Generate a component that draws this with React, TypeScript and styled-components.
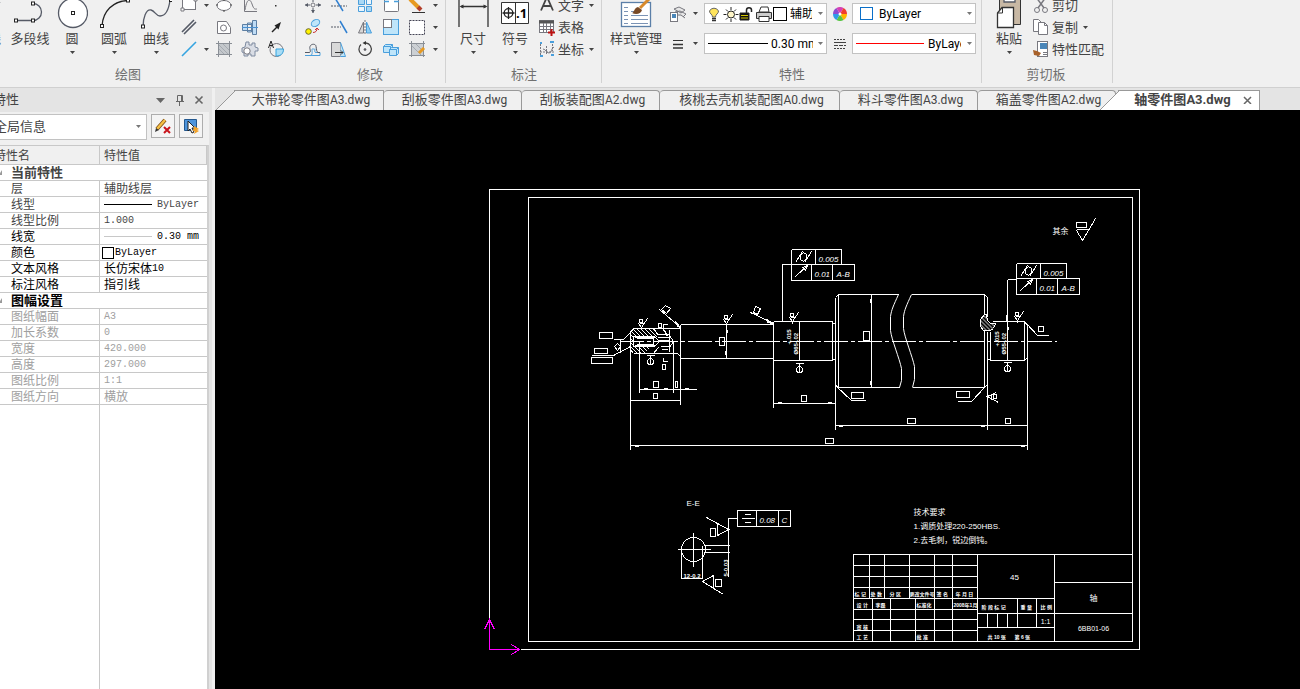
import React from "react";
import styled, { createGlobalStyle, css } from "styled-components";

const GlobalStyle = createGlobalStyle`
  * { box-sizing: border-box; }
  body {
    margin: 0;
    overflow: hidden;
    background: #f0f0f0;
    color: #444;
    font: 13px/18px "Open Sans", "Noto Sans CJK SC", sans-serif;
  }
  button, select { font: inherit; color: inherit; }
  svg { display: block; flex: none; }
`;

/* ---------- layout ---------- */

const Page = styled.div`
  display: flex;
  flex-direction: column;
  height: 100vh;
  overflow: hidden;
`;

const Ribbon = styled.header`
  display: flex;
  flex: none;
  height: 88px;
  margin-left: -39px;
  padding-bottom: 4px;
  border-bottom: 1px solid #d0d0d0;
  background: #f0f0f0;
`;

const Group = styled.section<{ $pad?: string }>`
  display: flex;
  flex: none;
  flex-direction: column;
  padding: ${(p) => p.$pad || "0"};
  border-right: 1px solid #d2d2d2;
`;

const GroupTools = styled.div<{ $gap?: number }>`
  display: flex;
  align-items: flex-end;
  justify-content: flex-start;
  gap: ${(p) => p.$gap || 0}px;
  height: 60px;
`;

const GroupTitle = styled.h2`
  margin: 0;
  color: #707070;
  font-size: 13px;
  font-weight: 400;
  line-height: 28px;
  text-align: center;
`;

const Plain = styled.button`
  display: flex;
  align-items: center;
  padding: 0;
  border: 0;
  background: none;
  white-space: nowrap;
`;

const BigButton = styled(Plain)<{ $width?: number }>`
  flex: none;
  flex-direction: column;
  width: ${(p) => p.$width || 42}px;
  height: 62px;
  padding-bottom: 2px;
  line-height: 16px;
`;

const CaretSlot = styled.span`
  display: flex;
  align-items: center;
  justify-content: center;
  width: 10px;
  height: 12px;
`;

const IconGrid = styled.div<{ $columns: string }>`
  display: grid;
  grid-template-columns: ${(p) => p.$columns};
  grid-auto-rows: 22px;
`;

const IconButton = styled(Plain)`
  justify-content: center;
`;

const TextButton = styled(Plain)`
  gap: 2px;
  height: 22px;
`;

const Stack = styled.div<{ $indent?: number }>`
  display: flex;
  flex-direction: column;
  padding-left: ${(p) => p.$indent || 0}px;
`;

const Fields = styled.div`
  display: grid;
  grid-template-columns: 24px 14px 123px 25px 124px;
  grid-auto-rows: 21px;
  row-gap: 9px;
  align-items: center;
  padding-bottom: 6px;
`;

const FieldBox = styled.label`
  display: flex;
  align-items: center;
  height: 21px;
  padding: 0 3px;
  border: 1px solid #c2c2c2;
  background: #fff;
  color: #000;
  font-family: Roboto, "Noto Sans CJK SC", sans-serif;
  font-size: 12px;
`;

const FieldSelect = styled.select<{ $cut?: number }>`
  flex: 1;
  min-width: 0;
  height: 18px;
  margin-right: ${(p) => p.$cut || 0}px;
  padding: 0;
  border: 0;
  outline: 0;
  appearance: none;
  background: none;
  overflow: hidden;
  text-overflow: clip;
`;

const Swatch = styled.span<{ $color: string; $size: number; $gap: number }>`
  flex: none;
  width: ${(p) => p.$size}px;
  height: ${(p) => p.$size}px;
  margin-right: ${(p) => p.$gap}px;
  border: 1px solid ${(p) => p.$color};
  background: #fff;
`;

const Rule = styled.span<{ $color: string; $width: number; $gap: number }>`
  flex: none;
  width: ${(p) => p.$width}px;
  height: 1px;
  margin-right: ${(p) => p.$gap}px;
  background: ${(p) => p.$color};
`;

const Workspace = styled.div`
  display: flex;
  flex: 1;
  min-height: 0;
`;

/* ---------- property panel ---------- */

const Panel = styled.aside`
  display: flex;
  flex: none;
  flex-direction: column;
  width: 227px;
  margin-left: -12px;
  border-right: 3px solid #f0f0f0;
  background: #e4e4e4;
`;

const PanelBar = styled.div`
  display: flex;
  align-items: center;
  gap: 5px;
  height: 24px;
  padding: 0 6px 2px 5px;
`;

const PanelTitle = styled.h2`
  flex: 1;
  margin: 0;
  font-size: 13px;
  font-weight: 400;
`;

const PanelBody = styled.div`
  display: flex;
  flex: 1;
  flex-direction: column;
  min-height: 0;
  margin-right: 3px;
  background: #f0f0f0;
`;

const Filter = styled.div`
  display: flex;
  gap: 4px;
  height: 33px;
  padding: 2px 0 5px;
`;

const FilterSelect = styled.label`
  display: flex;
  align-items: center;
  width: 159px;
  height: 26px;
  padding: 0 5px 2px;
  border: 1px solid #c2c2c2;
  background: #fff;
`;

const SquareButton = styled(Plain)`
  justify-content: center;
  width: 24px;
  height: 24px;
  border: 1px solid #adadad;
  background: #f4f4f4;
`;

const GridFrame = styled.div`
  flex: 1;
  min-height: 0;
  border-top: 1px solid #c8c8c8;
  border-right: 2px solid #d0d0d0;
  background: linear-gradient(#c8c8c8, #c8c8c8) 111px 0 / 1px 100% no-repeat #fff;
`;

const PropTable = styled.table`
  width: 219px;
  border-collapse: separate;
  border-spacing: 0;
  table-layout: fixed;
  font-size: 12px;
  line-height: 15px;
  background: #fff;
`;

const HeadCell = styled.th<{ $width: number; $pad: number }>`
  width: ${(p) => p.$width}px;
  height: 19px;
  padding: 0 0 0 ${(p) => p.$pad}px;
  border-right: 1px solid #c8c8c8;
  border-bottom: 1px solid #c8c8c8;
  background: #f0f0f0;
  font-weight: 400;
  text-align: left;
`;

const cell = css`
  height: 16px;
  border-bottom: 1px solid #c8c8c8;
  text-align: left;
  white-space: nowrap;
`;

const SectionCell = styled.th<{ $ink: string }>`
  ${cell}
  padding: 0 0 0 11px;
  color: ${(p) => p.$ink};
  font-size: 13px;
`;

const SectionLabel = styled.span`
  display: flex;
  align-items: center;
  gap: 8px;
`;

const NameCell = styled.th<{ $ink: string }>`
  ${cell}
  padding: 0 0 0 23px;
  border-right: 1px solid #c8c8c8;
  color: ${(p) => p.$ink};
  font-weight: 400;
`;

const ValueCell = styled.td<{ $ink: string; $tight?: boolean }>`
  ${cell}
  padding: 0 0 0 ${(p) => (p.$tight ? 2 : 4)}px;
  color: ${(p) => p.$ink};
`;

const ValueLine = styled.span`
  display: flex;
  align-items: center;
  height: 15px;
`;

const Mono = styled.span`
  font-family: "Liberation Mono", monospace;
  font-size: 10px;
`;

/* ---------- documents ---------- */

const Documents = styled.main`
  display: flex;
  flex: 1;
  flex-direction: column;
  min-width: 0;
`;

const TabBar = styled.nav`
  display: flex;
  flex: none;
  height: 22px;
  padding-top: 2px;
  background: #e4e4e4;
`;

const FileCode = styled.span`
  font-family: Roboto, sans-serif;
  font-size: 12px;
`;

const Tab = styled(Plain)<{ $width: number; $active?: boolean; $slant?: boolean }>`
  position: relative;
  flex: none;
  justify-content: center;
  gap: 12px;
  width: ${(p) => p.$width}px;
  padding-bottom: 2px;
  padding-left: ${(p) => (p.$active ? 28 : p.$slant ? 24 : 4)}px;
  border: 1px solid #999;
  border-width: 1px 1px 0 0;
  border-radius: 4px 4px 0 0;
  background: ${(p) => (p.$active ? "#fff" : "#f0f0f0")};
  font-weight: ${(p) => (p.$active ? 700 : 400)};
  font-size: 13px;
  ${FileCode} { font-size: ${(p) => (p.$active ? 13 : 12)}px; }
  ${(p) =>
    p.$slant &&
    css`
      margin-left: ${p.$active ? -17 : 0}px;
      border-image: linear-gradient(to right, transparent 20px, #999 20px) 1;
      background: linear-gradient(
            to bottom right,
            transparent 48%,
            #999 48%,
            #999 52%,
            ${p.$active ? "#fff" : "#f0f0f0"} 52%
          )
          0 0 / 20px 20px no-repeat,
        linear-gradient(${p.$active ? "#fff, #fff" : "#f0f0f0, #f0f0f0"}) 20px 0 / 100% 100% no-repeat;
    `}
`;

const Canvas = styled.div`
  flex: 1;
  min-height: 0;
  background: #000;
  svg { width: 100%; height: 100%; }
`;

/* ---------- small drawings ---------- */

const Caret = ({ color = "#444" }: { color?: string }) => (
  <svg width="5" height="3" viewBox="0 0 5 3">
    <path d="M0 0h5L2.5 3z" fill={color} />
  </svg>
);

const B = "#4a9fdc";
const K = "#555a66";
const Y = "#78787f";

const Icon = ({ children }: { children: React.ReactNode }) => (
  <svg width="18" height="18" viewBox="0 0 18 18" fill="none" stroke={Y} strokeWidth="1">
    {children}
  </svg>
);

const BigIcon = ({ children }: { children: React.ReactNode }) => (
  <svg width="32" height="32" viewBox="0 0 32 32" fill="none" stroke={K} strokeWidth="1.3">
    {children}
  </svg>
);

const Node = ({ x, y }: { x: number; y: number }) => (
  <rect x={x - 1.5} y={y - 1.5} width="3" height="3" fill="#fff" stroke="#222" strokeWidth="1" />
);

const drawIcons: [string, React.ReactNode, boolean][] = [
  ["矩形", <><rect x="2.500" y="3.500" width="13" height="10" fill="#fff" /><path d="M1 12h3v3H1zM14 2h3v3h-3z" fill="#fff" /></>, true],
  ["椭圆", <><ellipse cx="9" cy="9.500" rx="7" ry="5" fill="#fff" /><path d="M8 4h2M8 15h2M1 9h2M15 9h2" stroke="#444" /></>, false],
  ["公式曲线", <><path d="M3.500 2v13.500H16" /><path d="M4 14C6 2 9 2 11 8s3 5 5 5" /></>, false],
  ["点", <rect x="8" y="9" width="1.500" height="1.500" fill="#333" stroke="none" />, false],
  ["平行线", <path d="M2 14L14 2M4 16L16 4" stroke={K} strokeWidth="1.600" />, false],
  ["孔", <><path d="M2.500 3.500h9l4 6v6h-13z" fill="#fff" /><circle cx="8.500" cy="10" r="3" /></>, false],
  ["轴", <><path d="M1.500 6.500h9v6h-9zM6.500 5v9h4V5zM11.500 2.500h4v14h-4z" fill="#bfdcf5" stroke="#5d7fa3" /><path d="M1 9.500h16" stroke="#4a90d0" /></>, false],
  ["箭头", <><path d="M5 14l6-6" stroke="#222" strokeWidth="1.500" /><path d="M14 4L7.500 7.500l4 4z" fill="#222" stroke="none" /></>, false],
  ["直线段", <path d="M2 16L16 2" stroke="#35a4e0" strokeWidth="1.600" />, true],
  ["填充", <><rect x="3.500" y="3.500" width="11" height="11" fill="#c4c8cc" /><path d="M1 3.500h16M1 14.500h16M3.500 1v16M14.500 1v16" stroke="#8a8f96" /><path d="M4 9l5 5M4 5l9 9M8 4l6 6" stroke="#a4a9b0" /></>, false],
  ["齿轮", <><path d="M5 2h3v3h3V3h3v4l3 1v3h-3v5h-4v-2H7v2H3v-3L1 12V8l3-1z" fill="#d9dde5" stroke="#7e8ba0" /><circle cx="6" cy="11" r="3.200" fill="#fff" /></>, false],
  ["局部放大", <><circle cx="9.500" cy="10" r="6.500" /><path d="M9 9h7.500c0 5-3 7-7.500 7z" fill="#a8dcf5" stroke="#35a4e0" /><path d="M1.500 8L4 1l2.500 7M2.500 5.500h3" stroke="#222" /></>, false],
];

const editIcons: [string, React.ReactNode][] = [
  ["平移", <><path d="M9 1v5M9 12v5M1 9h5M12 9h5" stroke={K} strokeDasharray="2 1" /><path d="M9 1L7 4h4zM9 17l-2-3h4zM1 9l3-2v4zM17 9l-3-2v4z" fill={K} stroke="none" /><circle cx="9" cy="9" r="2" /></>],
  ["裁剪", <><path d="M1 10h16" stroke={K} strokeDasharray="2 1" /><path d="M5 2l8 13" stroke="#2f7fd0" strokeWidth="1.500" /></>],
  ["阵列", <><path d="M2.500 2.500h6v6h-6zM10.500 10.500h5v5h-5z" fill="#a9d8f5" stroke={B} /><path d="M10.500 2.500h5v6h-5zM2.500 10.500h6v5h-6z" fill="#eaf5fd" stroke={B} /></>],
  ["打断", <><rect x="2.500" y="2.500" width="14" height="13" rx="1" fill="#fff" /><path d="M2 5.500h5M12 5.500h5" stroke={B} strokeWidth="1.500" /></>],
  ["删除", <><path d="M2 3l9 9" stroke="#e79a22" strokeWidth="4" /><path d="M10 11l3 3" stroke="#b33e2b" strokeWidth="4" /><path d="M4 16.500h13" stroke="#333" /></>],
  ["平移复制", <><circle cx="4.500" cy="13.500" r="2.800" fill="#fff200" stroke="#6c6a2a" /><ellipse cx="11.500" cy="5" rx="4.500" ry="3.200" transform="rotate(-30 11.500 5)" fill="#bfe5fa" stroke={B} /><path d="M9 14.500c3 0 4-2 4-4M11 12l2-2 2 2" stroke="#c33" /></>],
  ["延伸", <><path d="M1 9h10" stroke={K} strokeDasharray="2 1" /><path d="M10 3l7 12" stroke="#2f7fd0" strokeWidth="1.500" /></>],
  ["镜像", <><path d="M7.500 4v11H2.500z" fill="#d7d7d7" /><path d="M10.500 4v11h5z" fill="#8fcff5" stroke={B} /><path d="M9 2v15" strokeDasharray="2 1" /></>],
  ["缩放", <><rect x="1.500" y="1.500" width="15" height="15" fill="#bfe5fa" stroke={B} /><rect x="1.500" y="1.500" width="8" height="8" fill="#fff" /></>],
  ["分解", <rect x="1.500" y="2.500" width="15" height="14" fill="#fff" stroke="#445" strokeDasharray="2 1" />],
  ["等距线", <><path d="M1 15.500h15v-3h-4c-2 0-1-2-1-4" stroke={B} /><path d="M1 12.500h4c3 0 0-4 1-6 1-3 6-3 6 0 1 3 0 5 2 6h2" stroke={K} /><path d="M1 15.500h5c3 0 2-4 2-6 0-1 2-1 2 0" stroke={B} /></>],
  ["拉伸", <><path d="M1.500 2.500h9v14h-9z" fill="#d9d9d9" /><path d="M10.500 2.500l5 14h-5" fill="#bfe5fa" stroke={B} /><path d="M5 12.500h8M11 10.500l2 2-2 2" stroke="#333" /></>],
  ["旋转", <><path d="M5 4.500A6.200 6.200 0 1 0 10 3" stroke="#444" strokeWidth="1.300" /><path d="M10 1v4L6.500 3z" fill="#333" stroke="none" /><circle cx="9" cy="9.500" r="1" fill="#333" /></>],
  ["复制块", <><path d="M1.500 6.500l2-2h7v6l-2 2h-7zM1.500 6.500h7v6M8.500 6.500l2-2" fill="#bfe5fa" stroke={B} /><path d="M7.500 9.500l2-2h7v6l-2 2h-7zM7.500 9.500h7v6M14.500 9.500l2-2" fill="#bfe5fa" stroke={B} /></>],
  ["编辑填充", <><rect x="3.500" y="3.500" width="12" height="12" fill="#ccd0d4" /><path d="M1 3.500h16M1 15.500h16M3.500 1v16M15.500 1v16" stroke="#8a8f96" /><path d="M4 6l9 9M8 4l7 7" stroke="#a4a9b0" /><path d="M11 13l5-5" stroke="#e79a22" strokeWidth="3" /></>],
];

const PolylineIcon = () => (
  <BigIcon><path d="M2 22.500h17a8 8 0 0 0 0-17" /><Node x={2} y={22.500} /><Node x={19} y={22.500} /><Node x={19} y={5.500} /></BigIcon>
);
const CircleIcon = () => (
  <BigIcon><circle cx="17" cy="15" r="14.500" fill="#fff" /><Node x={17} y={15} /></BigIcon>
);
const ArcIcon = () => (
  <BigIcon><path d="M4 28C5 13 15 3 30 2.500" stroke="#222" /><Node x={4} y={28} /><Node x={30} y={2.500} /></BigIcon>
);
const CurveIcon = () => (
  <BigIcon><path d="M3 29c0-9 3-18 8-17 4 1 5 6 9 6 6 0 9-8 10-16" /><Node x={3} y={28.500} /><Node x={31} y={2} /></BigIcon>
);
const DimensionIcon = () => (
  <BigIcon><path d="M2 0v29M31 0v29M4 8.500h25" stroke="#333" /><path d="M2.500 8.500l4-2v4zM30.500 8.500l-4-2v4z" fill="#333" stroke="none" /></BigIcon>
);
const SymbolIcon = () => (
  <BigIcon>
    <path d="M2.500 4.500h27v21h-27zM16.500 4.500v21" fill="#fff" stroke="#333" strokeWidth="1" />
    <circle cx="9.500" cy="15" r="4.300" stroke="#222" /><path d="M3.500 15h12M9.500 9v12" stroke="#222" />
    <text x="17" y="20" fontSize="13" fontWeight="700" fill="#000" stroke="none">.1</text>
  </BigIcon>
);
const StyleIcon = () => (
  <BigIcon>
    <rect x="1.500" y="4.500" width="29" height="24" fill="#fff" stroke="#5b7fa8" />
    <path d="M4 9.500h4M4 13.500h4M4 17.500h4M4 21.500h4M4 25.500h4M11 17.500h17M11 21.500h17M11 25.500h17M11 13.500h3" stroke="#7b93b5" strokeWidth="1" />
    <path d="M12 15c2 0 2-5 6-6l4 3c-1 4-6 5-10 3z" fill="#7a4a25" stroke="none" />
    <path d="M20 10L30 0" stroke="#d88a2c" strokeWidth="3" />
  </BigIcon>
);
const PasteIcon = () => (
  <BigIcon>
    <path d="M6.500 0h21v26.500h-21z" fill="#c8b8a4" stroke="#333" strokeWidth="1" /><path d="M11 0h11v4H11z" fill="#fff" />
    <path d="M9 9.500h11.500v20h-16V15z" fill="#fff" stroke="#333" strokeWidth="1.300" /><path d="M9.500 9.500V15H4.500" stroke="#333" strokeWidth="1" />
  </BigIcon>
);

/* ---------- CAD drawing ---------- */

const D = ({ d, dash }: { d: string; dash?: string }) => <path d={d} strokeDasharray={dash} />;

const Box = ({ x, y, w, h }: { x: number; y: number; w: number; h: number }) => (
  <rect x={x} y={y} width={w} height={h} />
);

const Label = ({ x, y, size = 8, children, italic, turn, middle }: {
  x: number; y: number; size?: number; children: string; italic?: boolean; turn?: boolean; middle?: boolean;
}) => (
  <text
    x={x} y={y} fontSize={size} fill="#fff" stroke="none"
    fontFamily='"Liberation Sans", "Noto Sans CJK SC", sans-serif'
    fontStyle={italic ? "italic" : "normal"}
    fontWeight={size < 7 ? 700 : 400}
    textAnchor={middle ? "middle" : "start"}
    transform={turn ? `rotate(-90 ${x} ${y})` : undefined}
  >
    {children}
  </text>
);

const Rough = ({ x, y }: { x: number; y: number }) => (
  <path transform={`translate(${x} ${y})`} d="M0 0h3v3h-3zM-1 4l3 4 6-9M0 4h5M2 8v2" />
);

const Datum = ({ x, y }: { x: number; y: number }) => (
  <g transform={`translate(${x} ${y})`}><path d="M-4 0h8M0 0v9" /><circle cx="0" cy="6" r="3" /></g>
);

const Tolerance = ({ x, y }: { x: number; y: number }) => (
  <g transform={`translate(${x} ${y})`}>
    <path d="M0 0h50v15M0 0v31h63V15H0M24 0v15M20 15v16M41 15v16" />
    <path d="M4 13l7-11M13 13l7-11M9 6l3-3 3 2v4l-3 3-3-2zM4 27l12-11M11 18l5-2-2 5z" />
    <Label x={27} y={12} size={8} italic>0.005</Label>
    <Label x={23} y={27} size={8} italic>0.01</Label>
    <Label x={45} y={27} size={8} italic>A-B</Label>
  </g>
);

const titleLabels: [number, number, string][] = [
  [854, 595, "标 记"], [870, 595, "处 数"], [889, 595, "分 区"], [909, 595, "更改文件号"], [936, 595, "签 名"], [955, 595, "年 月 日"],
  [856, 606, "设 计"], [875, 606, "李磊"], [916, 606, "标准化"], [953, 606, "2008年1月"],
  [856, 628, "审 核"], [856, 638, "工 艺"], [916, 638, "批 准"],
  [981, 608, "阶 段 标 记"], [1020, 608, "重 量"], [1040, 608, "比 例"],
  [987, 638, "共 10 张"], [1014, 638, "第 6 张"],
];

const Drawing = () => (
  <svg viewBox="215 110 1085 579" preserveAspectRatio="xMinYMin meet" role="img" aria-label="轴零件图">
    <defs>
      <pattern id="hatch" width="4" height="4" patternUnits="userSpaceOnUse">
        <path d="M0 0h1v1h-1zM1 1h1v1h-1zM2 2h1v1h-1zM3 3h1v1h-1z" fill="#fff" stroke="none" />
      </pattern>
    </defs>
    <g transform="translate(.5 .5)" fill="none" stroke="#fff" strokeWidth="1" shapeRendering="crispEdges">
      <path d="M489 619V189h650v460H520" />
      <Box x={528} y={197} w={604} h={444} />
      <g stroke="#f0f">
        <path d="M489 649V619M484 629l5-10 5 10M489 649h30M511 644l8 5-8 5" />
      </g>

      {/* journal and keyed end */}
      <path transform="translate(-.5 -.5)" d="M631 332l3-4h19l5 7-3 3v7l-6 4-4 4h-12l-3-4z" fill="url(#hatch)" stroke="none" />
      <D d="M630 332l3-4M653 328l5 7M658 347l-5 6M633 353l-3-4" />
      <path d="M633 336h21l5 5-5 5h-21z" fill="#000" />
      <D d="M634 337h20M634 345h20M636 338h17v6h-17M657 334h12M657 337h12M658 340h11M660 346h9M661 349h6M669 329v22M669 335l4 6-4 6M664 330l3 6" />
      <D d="M633 328h47M633 353h44l3 3M630 330v119M680 324v80M680 324h93M680 358h93M773 321v86M773 321h59v39h-59M832 323h3M832 359h3" />
      <D d="M835 297v132M835 297l3-3v93M838 294h60M911 294h73v93M984 294l3 3v19M987 331v98M838 387h61M912 387h72M835 384l3 3M984 387l3-3" />
      <path shapeRendering="auto" d="M898 294c-5 11-7 15-8 22v14c1 9 9 28 11 38v12l-2 7M911 294c-5 11-7 15-8 22v12c1 9 9 28 11 38v13l-2 8" />
      <D d="M992 321h32l3 4v124M990 331v29M1024 321v39M987 359h3v1h34l3-3" />
      <path d="M984 314h2l1 6 3 3h5l-2 5-3 2h-7l-3-4v-7z" fill="#000" />
      <path d="M984 314h2l1 6 3 3h5l-2 5-3 2h-7l-3-4v-7z" fill="url(#hatch)" />
      <D d="M619 341h437" dash="24 3 4 3" />

      {/* leaders and value boxes */}
      <Box x={599} y={332} w={13} h={6} /><Box x={594} y={348} w={13} h={5} /><Box x={591} y={357} w={21} h={6} />
      <D d="M613 339h10l8-8M591 355h22l17-9M620 338v14M614 346l3-3 3 3-3 4zM621 341h9" />
      <D d="M659 309l21 18M661 309l4-4 5 3-4 5zM675 321l5 6-3-1zM750 312l23 11M753 312l2-6 5 2-3 6zM766 319l7 4-6-1z" />
      <D d="M658 323h3v4h-3zM663 330v-6h4M663 357v4h4M662 364h3v5h-3z" />
      <D d="M1026 323l11 12h11M835 385l16 15h14M984 387l-13 14h-14" />
      <Box x={1038} y={326} w={5} h={5} /><Box x={851} y={392} w={12} h={6} /><Box x={956} y={391} w={13} h={6} />
      <D d="M998 402l-11-6 9-4M993 394h3v4h-3zM991 393v6" />
      <Rough x={639} y={319} /><Rough x={724} y={315} /><Rough x={790} y={313} /><Rough x={1015} y={312} />
      <Datum x={650} y={355} /><Datum x={799} y={363} /><Datum x={1007} y={362} />

      {/* dimensions */}
      <D d="M639 341v51M673 341v51M639 389h57M630 400h50M773 403h62M835 425h192M630 445h397M726 324v34M799 321v39M871 294v93M1007 279v81" />
      <D d="M643 388h4M663 388h4M684 388h4M777 402h4M827 402h4M634 446h4M1020 446h4M838 426h4M980 426h4M870 298v4M870 380v4M727 329v3M725 350v4M1008 326v3M1006 314v7" />
      <Box x={653} y={381} w={5} h={6} /><Box x={675} y={381} w={2} h={6} /><Box x={653} y={393} w={4} h={5} />
      <Box x={801} y={395} w={5} h={6} /><Box x={907} y={418} w={8} h={5} /><Box x={1005} y={418} w={5} h={5} />
      <Box x={825} y={438} w={8} h={5} /><Box x={719} y={337} w={5} h={8} /><Box x={863} y={331} w={6} h={9} />
      <Label x={790} y={344} size={6} turn>+.015</Label><Label x={797} y={354} size={6} turn>Ø65-.02</Label>
      <Label x={998} y={346} size={6} turn>+.015</Label><Label x={1005} y={354} size={6} turn>Ø55-.02</Label>

      <D d="M782 321v-57h9M1007 279h9" />
      <Tolerance x={791} y={249} /><Tolerance x={1016} y={263} />

      <Label x={1052} y={233} size={8}>其余</Label>
      <D d="M1076 222h10v5h-10zM1076 229h12M1076 230l6 10 13-22" />

      {/* section view */}
      <Label x={686} y={505}>E-E</Label>
      <circle cx="693" cy="549" r="12" />
      <D d="M677 549h33M693 532v34M703 545h26M703 552h26M702 545v33M681 549v29h21M728 576v-58h9" />
      <D d="M706 517l22 12-11 6v-12M710 528h5v8h-5zM702 581l11-6v12M702 581l21 13M715 579h6v7h-6z" />
      <D d="M737 510h53v16h-53zM756 510v16M778 510v16M744 514h6M741 518h13M744 522h6" />
      <Label x={759} y={522} italic>0.08</Label><Label x={781} y={522} italic>C</Label>
      <Label x={683} y={577} size={6}>12-0.2</Label><Label x={727} y={576} size={6} turn>5-0.03</Label>

      <Label x={913} y={514}>技术要求</Label>
      <Label x={913} y={528}>1.调质处理220-250HBS.</Label>
      <Label x={913} y={542}>2.去毛刺，锐边倒钝。</Label>

      {/* title block */}
      <D d="M853 641v-87h279M977 554v87M1054 554v87M853 565h124M853 576h124M853 587h124M853 598h201M853 609h124M853 619h124M853 630h124" />
      <D d="M869 554v44M884 554v44M909 554v44M934 554v87M952 554v87M872 598v43M890 598v43M915 598v43" />
      <D d="M977 613h155M977 627h77M1017 598v29M1036 598v29M987 613v14M997 613v14M1007 613v14M1054 582h78" />
      {titleLabels.map(([x, y, t]) => <Label key={`${x}-${y}`} x={x} y={y} size={5}>{t}</Label>)}
      <Label x={1014} y={579} middle>45</Label>
      <Label x={1093} y={600} middle>轴</Label>
      <Label x={1093} y={630} size={7} middle>6BB01-06</Label>
      <Label x={1045} y={623} size={7} middle>1:1</Label>
    </g>
  </svg>
);

/* ---------- page data ---------- */

type Row = { name: string; value: React.ReactNode; ink: string; tight?: boolean };

const currentRows: Row[] = [
  { name: "层", value: "辅助线层", ink: "#444" },
  { name: "线型", value: <><Rule $color="#000" $width={48} $gap={5} /><Mono>ByLayer</Mono></>, ink: "#444" },
  { name: "线型比例", value: <Mono>1.000</Mono>, ink: "#444" },
  { name: "线宽", value: <><Rule $color="#c8c8c8" $width={48} $gap={5} /><Mono>0.30 mm</Mono></>, ink: "#000" },
  { name: "颜色", value: <><Swatch $color="#000" $size={12} $gap={1} /><Mono>ByLayer</Mono></>, ink: "#000", tight: true },
  { name: "文本风格", value: <>长仿宋体<Mono>10</Mono></>, ink: "#000" },
  { name: "标注风格", value: "指引线", ink: "#000" },
];

const sheetRows: Row[] = [
  ["图纸幅面", "A3"], ["加长系数", "0"], ["宽度", "420.000"], ["高度", "297.000"], ["图纸比例", "1:1"],
].map(([name, v]) => ({ name, value: <Mono>{v}</Mono>, ink: "#a0a0a0" }) as Row)
  .concat([{ name: "图纸方向", value: "横放", ink: "#a0a0a0" }]);

const tabs: [string, string, number][] = [
  ["大带轮零件图", "A3.dwg", 169], ["刮板零件图", "A3.dwg", 138], ["刮板装配图", "A2.dwg", 138],
  ["核桃去壳机装配图", "A0.dwg", 180], ["料斗零件图", "A3.dwg", 138], ["箱盖零件图", "A2.dwg", 138],
];

const Rows = ({ title, ink, rows }: { title: string; ink: string; rows: Row[] }) => (
  <tbody>
    <tr>
      <SectionCell colSpan={2} $ink={ink}>
        <SectionLabel>
          <svg width="4" height="5" viewBox="0 0 4 5"><path d="M3 0v5H0z" fill="#999" /></svg>
          {title}
        </SectionLabel>
      </SectionCell>
    </tr>
    {rows.map((r) => (
      <tr key={r.name}>
        <NameCell scope="row" $ink={r.ink}>{r.name}</NameCell>
        <ValueCell $ink={r.ink} $tight={r.tight}><ValueLine>{r.value}</ValueLine></ValueCell>
      </tr>
    ))}
  </tbody>
);

const Big = ({ label, icon, caret = true, width }: {
  label: string; icon: React.ReactNode; caret?: boolean; width?: number;
}) => (
  <BigButton type="button" $width={width}>
    {icon}
    {label}
    <CaretSlot>{caret && <Caret />}</CaretSlot>
  </BigButton>
);

const FileName = ({ title, code }: { title: string; code: string }) => (
  <span>{title}<FileCode>{code}</FileCode></span>
);

export default function App() {
  return (
    <Page>
      <GlobalStyle />
      <Ribbon>
        <Group $pad="0 6px 0 6px">
          <GroupTools>
            <Big label="直线" icon={<BigIcon><path d="M4 28L28 4" /></BigIcon>} />
            <Big label="多段线" icon={<PolylineIcon />} caret={false} />
            <Big label="圆" icon={<CircleIcon />} />
            <Big label="圆弧" icon={<ArcIcon />} />
            <Big label="曲线" icon={<CurveIcon />} />
            <IconGrid $columns="24px 10px 26px 26px 26px">
              {drawIcons.map(([name, art, menu], i) => (
                <React.Fragment key={name}>
                  <IconButton type="button" aria-label={name}><Icon>{art}</Icon></IconButton>
                  {i % 4 === 0 && <IconButton as="span">{menu && <Caret />}</IconButton>}
                </React.Fragment>
              ))}
            </IconGrid>
          </GroupTools>
          <GroupTitle>绘图</GroupTitle>
        </Group>

        <Group $pad="0 5px 0 4px">
          <GroupTools>
            <IconGrid $columns="26px 26px 26px 26px 26px 10px">
              {editIcons.map(([name, art], i) => (
                <React.Fragment key={name}>
                  <IconButton type="button" aria-label={name}><Icon>{art}</Icon></IconButton>
                  {i % 5 === 4 && <IconButton as="span"><Caret /></IconButton>}
                </React.Fragment>
              ))}
            </IconGrid>
          </GroupTools>
          <GroupTitle>修改</GroupTitle>
        </Group>

        <Group $pad="0 5px 0 6px">
          <GroupTools>
            <Big label="尺寸" icon={<DimensionIcon />} />
            <Big label="符号" icon={<SymbolIcon />} />
            <Stack $indent={2}>
              <TextButton type="button">
                <Icon><path d="M3 14.500L8.500 2h1L15 14.500M5.500 10h7" stroke="#444" strokeWidth="1.800" /></Icon>
                文字<CaretSlot><Caret /></CaretSlot>
              </TextButton>
              <TextButton type="button">
                <Icon>
                  <rect x="1.500" y="2.500" width="14" height="12" fill="#fff" /><path d="M1 4h15" stroke="#555" strokeWidth="3" />
                  <path d="M1 8.500h15M1 11.500h15M5.500 5v9M8.500 5v9M12.500 5v9" /><path d="M13.500 11v7M10 14.500h7" stroke="#b11" strokeWidth="2" />
                </Icon>
                表格<CaretSlot />
              </TextButton>
              <TextButton type="button">
                <Icon>
                  <path d="M2.500 4v13M2 12h14M8.500 6v8M14.500 4v7" strokeDasharray="2 1" /><path d="M5 9c3 0 3 4 6 4s2-5 5-6" />
                  <path d="M2 3h2M12 2h4M2 16h3M13 15h3" stroke={B} strokeWidth="2" />
                </Icon>
                坐标<CaretSlot><Caret /></CaretSlot>
              </TextButton>
            </Stack>
          </GroupTools>
          <GroupTitle>标注</GroupTitle>
        </Group>

        <Group $pad="0 5px 0 6px">
          <GroupTools $gap={2}>
            <Big label="样式管理" icon={<StyleIcon />} width={56} />
            <Fields>
              <IconButton type="button" aria-label="图层">
                <Icon>
                  <path d="M5 4l5-2 6 3-4 3zM6 7l5-1 6 3-3 3M8 10l4 0 4 3" fill="#e8e8e8" />
                  <rect x="1.500" y="7.500" width="7" height="9" fill="#fff" /><rect x="3" y="9" width="4" height="4" fill="#4a86b8" stroke="none" />
                </Icon>
              </IconButton>
              <CaretSlot><Caret /></CaretSlot>
              <FieldBox>
                <svg width="65" height="18" viewBox="0 0 65 18" fill="none" stroke="#222">
                  <path d="M4 12c0-3-3-3-3-6a5 5 0 0 1 9 0c0 3-3 3-3 6z" fill="#ffe45c" stroke="#666" transform="translate(.5 0)" /><path d="M4 13.500h4M4 15.500h4" stroke="#333" strokeWidth="1.500" />
                  <circle cx="23" cy="9.500" r="3.500" fill="#fff6c8" /><path d="M23 2v3M23 14v3M15.500 9.500h3M27.500 9.500h3M18 4.500l2 2M26 12.500l2 2M28 4.500l-2 2M20 12.500l-2 2" />
                  <path d="M32 8h9v7h-9z" fill="#111" /><path d="M33 10.500h7M33 13h7" stroke="#d6c800" /><path d="M38.500 8V5c0-3 5-3 5 0v2" strokeWidth="1.500" />
                  <path d="M51 7l2-5h7l1 5z" fill="#fff" stroke="#333" /><path d="M48.500 7.500h15v6h-15z" fill="#ccc" stroke="#333" /><path d="M51 11.500h10v5H51z" fill="#fff" stroke="#333" />
                </svg>
                <Swatch $color="#000" $size={14} $gap={3} />
                <FieldSelect aria-label="层" $cut={6}><option>辅助线层</option></FieldSelect>
                <Caret color="#777" />
              </FieldBox>
              <IconButton type="button" aria-label="颜色">
                <svg width="14" height="14" viewBox="0 0 14 14">
                  <path d="M7 7L0 7A7 7 0 0 1 3.500 1z" fill="#8d4bd0" /><path d="M7 7L3.500 1a7 7 0 0 1 7 0z" fill="#d63fb4" />
                  <path d="M7 7l3.500-6A7 7 0 0 1 14 7z" fill="#f03c2e" /><path d="M7 7h7a7 7 0 0 1-3.500 6z" fill="#ffb400" />
                  <path d="M7 7l3.500 6a7 7 0 0 1-7 0z" fill="#57c443" /><path d="M7 7l-3.500 6A7 7 0 0 1 0 7z" fill="#2e9be8" />
                  <circle cx="7" cy="7" r="1.500" fill="#fff" />
                </svg>
              </IconButton>
              <FieldBox>
                <Rule $color="transparent" $width={1} $gap={3} />
                <Swatch $color="#0a6fc8" $size={13} $gap={6} />
                <FieldSelect aria-label="颜色"><option>ByLayer</option></FieldSelect>
                <Caret color="#777" />
              </FieldBox>

              <IconButton type="button" aria-label="线宽">
                <Icon><path d="M4 5.500h10" stroke="#333" /><path d="M4 9.500h10M4 13h10" stroke="#333" strokeWidth="1.500" /></Icon>
              </IconButton>
              <CaretSlot><Caret /></CaretSlot>
              <FieldBox>
                <Rule $color="#000" $width={60} $gap={3} />
                <FieldSelect aria-label="线宽" $cut={5}><option>0.30 mm</option></FieldSelect>
                <Caret color="#777" />
              </FieldBox>
              <IconButton type="button" aria-label="线型">
                <svg width="14" height="12" viewBox="0 0 14 12" fill="none" stroke="#444">
                  <path d="M1 1.500h12M1 10.500h12" strokeDasharray="2 1" /><path d="M1 4.500h12" /><path d="M1 7.500h12" strokeDasharray="4 1" />
                </svg>
              </IconButton>
              <FieldBox>
                <Rule $color="#f00" $width={68} $gap={4} />
                <FieldSelect aria-label="线型" $cut={6}><option>ByLayer</option></FieldSelect>
                <Caret color="#777" />
              </FieldBox>
            </Fields>
          </GroupTools>
          <GroupTitle>特性</GroupTitle>
        </Group>

        <Group $pad="0 8px 0 6px">
          <GroupTools $gap={2}>
            <Big label="粘贴" icon={<PasteIcon />} />
            <Stack>
              <TextButton type="button">
                <Icon><path d="M4 1l8 11M14 1L6 12" strokeWidth="1.500" /><circle cx="5" cy="14" r="2.500" /><circle cx="13" cy="14" r="2.500" /></Icon>
                剪切
              </TextButton>
              <TextButton type="button">
                <Icon><path d="M1.500 1.500h5l3 3v9h-8z" fill="#fff" /><path d="M6.500 4.500h6l3 3v9h-9z" fill="#fff" /><path d="M12.500 4.500v3h3" /></Icon>
                复制<CaretSlot><Caret /></CaretSlot>
              </TextButton>
              <TextButton type="button">
                <Icon><rect x="5.500" y="1.500" width="10" height="15" fill="#fff" /><path d="M8 3h7v6H8z" fill="#4a86b8" stroke="none" /><path d="M11 12.500h4M11 14.500h4" /><path d="M1 10l4 1 4 2-2 3-5-1z" fill="#a8612a" stroke="none" /></Icon>
                特性匹配
              </TextButton>
            </Stack>
          </GroupTools>
          <GroupTitle>剪切板</GroupTitle>
        </Group>
      </Ribbon>

      <Workspace>
        <Panel>
          <PanelBar>
            <PanelTitle>特性</PanelTitle>
            <Plain type="button" aria-label="菜单"><svg width="14" height="14" viewBox="0 0 14 14"><path d="M2 6h9l-4.500 5z" fill="#666" /></svg></Plain>
            <Plain type="button" aria-label="固定"><svg width="14" height="14" viewBox="0 0 14 14" fill="none" stroke="#666"><path d="M4.500 9V3.500h5V9M3 9.500h8M6.500 10v4M8.500 4v5" /></svg></Plain>
            <Plain type="button" aria-label="关闭"><svg width="14" height="14" viewBox="0 0 14 14"><path d="M3.500 4.500l7 7M10.500 4.500l-7 7" stroke="#666" strokeWidth="1.600" /></svg></Plain>
          </PanelBar>
          <PanelBody>
            <Filter>
              <FilterSelect>
                <FieldSelect aria-label="选择对象"><option>全局信息</option></FieldSelect>
                <Caret color="#777" />
              </FilterSelect>
              <SquareButton type="button" aria-label="取消选择">
                <svg width="18" height="18" viewBox="0 0 18 18" fill="none"><path d="M3 12l8-9" stroke="#7a4a10" strokeWidth="4" /><path d="M3 12l8-9" stroke="#f6c044" strokeWidth="2.500" /><path d="M1 15l1-4 3 2z" fill="#333" /><path d="M10 10l6 6M16 10l-6 6" stroke="#c8141c" strokeWidth="2" /></svg>
              </SquareButton>
              <SquareButton type="button" aria-label="快速选择">
                <svg width="18" height="18" viewBox="0 0 18 18"><path d="M2.500 2.500h12v11h-12z" fill="#4d94dc" stroke="#24588f" /><path d="M6 4l7 7h-3l2 4-2 1-2-4-2 2z" fill="#fff" stroke="#222" /><path d="M12 9l5 3-2 1 2 1-5 3 1-3h-2z" fill="#f3a32a" /></svg>
              </SquareButton>
            </Filter>
            <GridFrame>
              <PropTable>
                <thead>
                  <tr>
                    <HeadCell scope="col" $width={112} $pad={6}>特性名</HeadCell>
                    <HeadCell scope="col" $width={107} $pad={4}>特性值</HeadCell>
                  </tr>
                </thead>
                <Rows title="当前特性" ink="#444" rows={currentRows} />
                <Rows title="图幅设置" ink="#000" rows={sheetRows} />
              </PropTable>
            </GridFrame>
          </PanelBody>
        </Panel>

        <Documents>
          <TabBar>
            {tabs.map(([title, code, width], i) => (
              <Tab key={title} type="button" $width={width} $slant={i === 0}>
                <FileName title={title} code={code} />
              </Tab>
            ))}
            <Tab type="button" $width={161} $active $slant>
              <FileName title="轴零件图" code="A3.dwg" />
              <svg width="9" height="9" viewBox="0 0 9 9"><path d="M1 2l7 7M8 2L1 9" stroke="#666" strokeWidth="1.500" /></svg>
            </Tab>
          </TabBar>
          <Canvas><Drawing /></Canvas>
        </Documents>
      </Workspace>
    </Page>
  );
}
